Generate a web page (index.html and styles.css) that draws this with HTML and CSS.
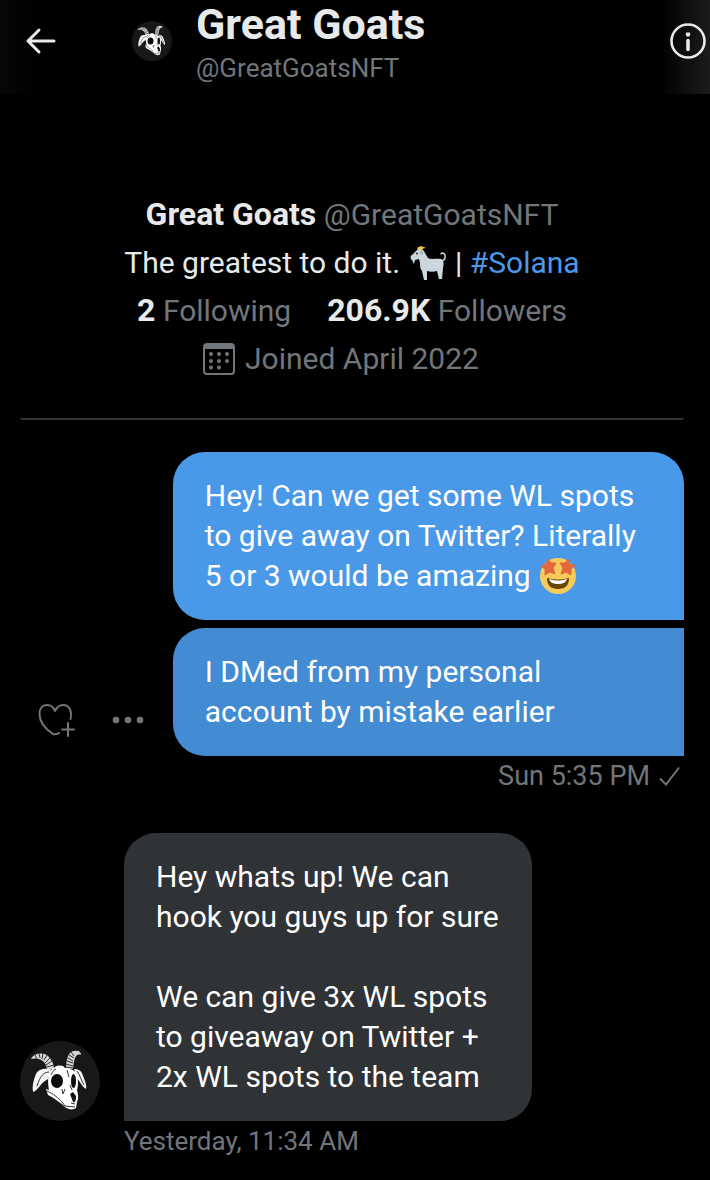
FILE: index.html
```html
<!DOCTYPE html>
<html lang="en">
<head>
<meta charset="utf-8">
<meta name="viewport" content="width=device-width, initial-scale=1">
<title>Great Goats</title>
<link rel="stylesheet" href="styles.css">
</head>
<body>
<svg class="defs" aria-hidden="true">
  <symbol id="goat-skull" viewBox="0 0 80 80">
    <circle cx="40" cy="40" r="40" fill="#181818"/>
    <path d="M11 18C14 12 23 11 28 15C32 19 34 23 34 28L27 28C26 20 19 16 11 18Z" fill="#d4d4d4"/>
    <path d="M61 14C56 12 54 17 53 28L46 28C46 20 48 10 54 10C59 9 61 11 61 14Z" fill="#d4d4d4"/>
    <path d="M15 14L17 18M19 12L20 17M23 12L22 18M27 14L24 19M30 17L25 22M32 20L26 24M34 24L27 26M51 11L54 15M49 14L54 17M48 17L53 20M47 20L53 22M46 23L53 25M46 26L53 27" stroke="#333" stroke-width="1" fill="none"/>
    <path d="M31 28C24 27 18 28 16 33C13 40 12 46 13 51C18 50 20 42 28 38ZM54 28C60 28 62 31 63 35C65 40 67 44 66 48C62 46 61 41 57 38Z" fill="#f5f5f5"/>
    <path d="M29 31C24 31 20 35 17 45M57 30C60 34 61 39 64 44" fill="none" stroke="#333"/>
    <path d="M35 26C38 24 43 24 45 27C49 28 53 28 55 31C58 36 59 43 57 49C58 53 59 57 57 61L56 67C52 70 46 68 43 64C38 60 34 57 28 54L26 48L29 49C28 43 27 34 31 29Z" fill="#fff"/>
    <ellipse cx="37" cy="40" rx="6" ry="7" fill="#0c0c0c"/>
    <ellipse cx="53.500" cy="40" rx="2.500" ry="7" fill="#0c0c0c"/>
    <path d="M50 53L53 51L56 55C56 60 55 62 53 61Z" fill="#111"/>
    <path d="M27 50C34 53 38 57 42 61L45 65L55 66M36 28C33 29 32 32 31 34M47 29L49 36M42 48L43 53L45 48M50 44L52 49M51 62L55 63" fill="none" stroke="#333"/>
  </symbol>
</svg>

<header class="topbar">
  <button class="icon-button back" type="button" aria-label="Back">
    <svg width="32" height="28" viewBox="0 0 32 28"><path d="M14 3L3 14L14 25M3 14H29" fill="none" stroke="currentColor" stroke-width="3" stroke-linecap="round" stroke-linejoin="round"/></svg>
  </button>
  <svg class="avatar-small" aria-hidden="true"><use href="#goat-skull"/></svg>
  <div class="identity">
    <h1 class="title">Great Goats</h1>
    <p class="handle">@GreatGoatsNFT</p>
  </div>
  <button class="icon-button info" type="button" aria-label="Conversation info">
    <svg width="36" height="36" viewBox="0 0 36 36"><circle cx="18" cy="18" r="16.5" fill="none" stroke="currentColor" stroke-width="2.6"/><circle cx="18" cy="11.5" r="2.2" fill="currentColor"/><path d="M18 17.5V26.5" stroke="currentColor" stroke-width="3.6" stroke-linecap="round"/></svg>
  </button>
</header>

<main class="conversation">
  <section class="profile">
    <p><strong>Great Goats</strong> <span class="muted">@GreatGoatsNFT</span></p>
    <p>The greatest to do it.
      <svg class="emoji" role="img" aria-label="goat" viewBox="0 0 36 36">
        <path d="M32 16C36 15 36 9 33 8Q31 8 31 9" fill="none" stroke="#ccd6dd" stroke-width="1.500" stroke-linecap="round"/>
        <path d="M8 4C11 3 14 5 15 8L18 13C22 15 27 13 31 14C34 15 34 19 33 23L32 34H29L27 26C24 27 20 27 17 26L17 35H14L12 26C10 24 10 21 10 18L9 14L5 15L4 19L2 15C0 14 0 11 2 10Z" fill="#ccd6dd"/>
        <path d="M7 4C8 1 11 0 16 3C13 3 12 4 12 6Z" fill="#f4c34f"/>
        <path d="M10 6C14 5 14 9 12 10C10 9 9 8 10 6Z" fill="#aab5bd"/>
        <circle cx="7" cy="8.5" r="1" fill="#292f33"/>
      </svg>
      | <a class="tag" href="#solana">#Solana</a></p>
    <p class="stats"><span><strong>2</strong> <span class="muted">Following</span></span><span><strong>206.9K</strong> <span class="muted">Followers</span></span></p>
    <p class="joined muted">
      <svg width="32" height="32" viewBox="0 0 32 32" aria-hidden="true"><rect x="1" y="1" width="30" height="30" rx="3" fill="none" stroke="currentColor" stroke-width="2"/><path d="M1 6V3Q1 1 3 1H29Q31 1 31 3V6Z" fill="currentColor"/><g fill="currentColor"><circle cx="8" cy="11" r="2"/><circle cx="16" cy="11" r="2"/><circle cx="24" cy="11" r="2"/><circle cx="8" cy="18" r="2"/><circle cx="16" cy="18" r="2"/><circle cx="24" cy="18" r="2"/><circle cx="8" cy="24.5" r="2"/><circle cx="16" cy="24.5" r="2"/></g></svg>
      <span>Joined April 2022</span>
    </p>
  </section>

  <section class="group sent">
    <p class="bubble first">Hey! Can we get some WL spots to give away on Twitter? Literally 5 or 3 would be amazing
      <svg class="emoji" role="img" aria-label="star-struck" viewBox="0 0 36 36">
        <circle cx="18" cy="18" r="18" fill="#f7cb5b"/>
        <path d="M7 20Q18 23 29 20Q29 31 18 31Q7 31 7 20Z" fill="#664500"/>
        <path d="M9 21Q18 24 27 21Q26 26 18 26Q10 26 9 21Z" fill="#fff"/>
        <path d="M8 1L11 5L16 5L13 10L15 16L10 14L5 17L5 11L1 8L6 6Z" fill="#e2683c" stroke="#e2683c" stroke-linejoin="round"/>
        <path d="M28 1L25 5L20 5L23 10L21 16L26 14L31 17L31 11L35 8L30 6Z" fill="#e2683c" stroke="#e2683c" stroke-linejoin="round"/>
      </svg></p>
    <div class="row">
      <div class="actions">
        <button class="icon-button" type="button" aria-label="Add reaction">
          <svg width="38" height="34" viewBox="0 0 38 34"><path d="M32.5 16C34 11 33 2 25 2C20 2 18 6 17 8C16 5 13 2 9 2C4 2 1.500 6 1.500 11C1.500 20 9 27 15 31Q17 32 21 30M30 20V33M24 26.500H36" fill="none" stroke="currentColor" stroke-width="2" stroke-linecap="round" stroke-linejoin="round"/></svg>
        </button>
        <button class="icon-button" type="button" aria-label="More options">
          <svg width="32" height="8" viewBox="0 0 32 8" fill="currentColor"><circle cx="4" cy="4" r="3.300"/><circle cx="16" cy="4" r="3.300"/><circle cx="28" cy="4" r="3.300"/></svg>
        </button>
      </div>
      <p class="bubble last">I DMed from my personal account by mistake earlier</p>
    </div>
    <p class="time">Sun 5:35 PM <svg width="24" height="20" viewBox="0 0 24 20" role="img" aria-label="Sent"><path d="M2 12.500L8 18.500L21 1.500" fill="none" stroke="currentColor" stroke-width="2"/></svg></p>
  </section>

  <section class="group received">
    <svg class="avatar" role="img" aria-label="Great Goats"><use href="#goat-skull"/></svg>
    <div class="bubble">
      <p>Hey whats up! We can hook you guys up for sure</p>
      <p>We can give 3x WL spots to giveaway on Twitter + 2x WL spots to the team</p>
    </div>
    <p class="time">Yesterday, 11:34 AM</p>
  </section>
</main>
</body>
</html>
```
FILE: styles.css
```css
* {
  box-sizing: border-box;
}

body {
  margin: 0;
  background: #000;
  color: #e7e9ea;
  font: 30px/40px Roboto, "Liberation Sans", sans-serif;
}

p,
h1 {
  margin: 0;
}

a {
  color: #4a99e9;
  text-decoration: none;
}

svg {
  flex-shrink: 0;
}

strong {
  font-size: 32px;
  line-height: 32px;
}

.defs {
  display: none;
}

.muted {
  color: #71767b;
}

.icon-button {
  display: flex;
  padding: 0;
  border: 0;
  background: none;
  color: inherit;
  cursor: pointer;
}

.topbar {
  display: flex;
  align-items: center;
  height: 94px;
  padding: 0 4px 12px 25px;
  background: linear-gradient(to right, #060606, #000 40px, #000 calc(100% - 50px), #1c1c1c);
}

.avatar-small {
  width: 40px;
  height: 40px;
  margin-left: 75px;
}

.identity {
  flex: 1;
  margin-left: 24px;
  padding-top: 6px;
}

.title {
  font-size: 43px;
  line-height: 48px;
}

.handle {
  color: #71767b;
  font-size: 26px;
  line-height: 40px;
}

.conversation {
  padding: 97px 26px 24px 20px;
}

.profile {
  padding-bottom: 35px;
  border-bottom: 2px solid #2f3336;
  border-radius: 3px;
  line-height: 48px;
  text-align: center;
}

.emoji {
  width: 36px;
  height: 36px;
  margin: 0 2px;
  vertical-align: -8px;
}

.stats {
  display: flex;
  justify-content: center;
  gap: 36px;
}

.joined {
  display: flex;
  align-items: center;
  justify-content: center;
  gap: 10px;
  padding-right: 22px;
}

.bubble {
  padding: 24px 32px;
  color: #fff;
}

.sent {
  display: flex;
  flex-direction: column;
  align-items: flex-end;
  gap: 8px;
  margin-top: 32px;
}

.sent .bubble {
  width: 77%;
}

.first {
  border-radius: 32px 32px 0 32px;
  background: #4a99e9;
}

.row {
  display: flex;
  align-items: center;
  width: 100%;
}

.row .last {
  padding-right: 100px;
  border-radius: 32px 0 0 32px;
  background: #438bd3;
}

.actions {
  display: flex;
  flex: 1;
  align-items: center;
  gap: 36px;
  padding: 56px 0 0 18px;
  color: #71767b;
}

.time {
  color: #71767b;
  font-size: 26px;
  line-height: 40px;
}

.sent .time {
  display: flex;
  align-items: center;
  gap: 8px;
  margin: -8px 2px 0 0;
  font-size: 27px;
}

.received {
  display: grid;
  grid-template-columns: 80px minmax(0, 408px);
  column-gap: 24px;
  align-items: end;
  margin-top: 37px;
}

.received .bubble {
  display: grid;
  gap: 40px;
  border-radius: 32px 32px 32px 0;
  background: #2f3336;
}

.received .time {
  grid-column: 2;
}

.avatar {
  width: 80px;
  height: 80px;
}
```
